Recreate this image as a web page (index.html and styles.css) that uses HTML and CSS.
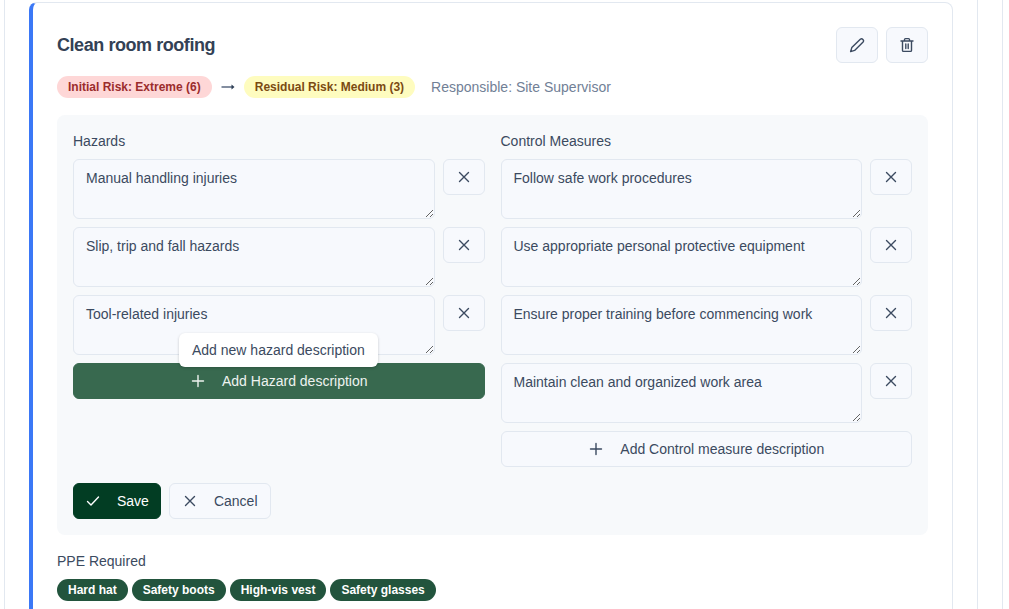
FILE: index.html
```html
<!DOCTYPE html>
<html lang="en">
<head>
    <meta charset="UTF-8">
    <meta name="viewport" content="width=device-width, initial-scale=1.0">
    <title>Clean room roofing</title>
    <link rel="stylesheet" href="styles.css">
</head>
<body>

    <svg class="sprite" width="0" height="0">
        <symbol id="i-x" viewBox="0 0 16 16"><path d="M3.500 3.500l9 9M12.500 3.500l-9 9"/></symbol>
        <symbol id="i-plus" viewBox="0 0 16 16"><path d="M8 2.500v11M2.500 8h11"/></symbol>
        <symbol id="i-check" viewBox="0 0 16 16"><path d="M2.500 8.500l3.500 3.500 7.500-8"/></symbol>
    </svg>

    <div class="page">
        <div class="section">
            <div class="card">
                <div class="card-head">
                    <h2>Clean room roofing</h2>
                    <div class="card-actions">
                        <button class="btn icon-btn" aria-label="Edit">
                            <svg class="icon" viewBox="0 0 16 16"><path d="M11.300 2.200a2 2 0 0 1 2.800 2.800L5.600 13.400l-4 1.200 1.200-4z"/></svg>
                        </button>
                        <button class="btn icon-btn" aria-label="Delete">
                            <svg class="icon" viewBox="0 0 16 16"><path d="M2 4h12M5.500 4V2.600c0-.6.4-1 1-1h3c.6 0 1 .4 1 1V4M3.500 4v9.400c0 .6.4 1 1 1h7c.6 0 1-.4 1-1V4M6.800 7v4.500M9.200 7v4.500"/></svg>
                        </button>
                    </div>
                </div>

                <div class="risk-row">
                    <span class="badge badge-red">Initial Risk: Extreme (6)</span>
                    <svg class="arrow" viewBox="0 0 16 16"><path class="arrow-line" d="M1.500 8h11"/><path class="arrow-head" d="M11.500 5.500L14.500 8l-3 2.500z"/></svg>
                    <span class="badge badge-yellow">Residual Risk: Medium (3)</span>
                    <span class="responsible">Responsible: Site Supervisor</span>
                </div>

                <div class="edit-panel">
                    <div class="columns">
                        <div class="column">
                            <div class="field-label">Hazards</div>
                            <div class="item-row">
                                <textarea readonly>Manual handling injuries</textarea>
                                <button class="btn icon-btn" aria-label="Remove"><svg class="icon"><use href="#i-x"/></svg></button>
                            </div>
                            <div class="item-row">
                                <textarea readonly>Slip, trip and fall hazards</textarea>
                                <button class="btn icon-btn" aria-label="Remove"><svg class="icon"><use href="#i-x"/></svg></button>
                            </div>
                            <div class="item-row">
                                <textarea readonly>Tool-related injuries</textarea>
                                <button class="btn icon-btn" aria-label="Remove"><svg class="icon"><use href="#i-x"/></svg></button>
                            </div>
                            <div class="add-wrap">
                                <div class="tooltip">Add new hazard description</div>
                                <button class="btn add-btn add-btn-hover"><svg class="icon"><use href="#i-plus"/></svg>Add Hazard description</button>
                            </div>
                        </div>
                        <div class="column">
                            <div class="field-label">Control Measures</div>
                            <div class="item-row">
                                <textarea readonly>Follow safe work procedures</textarea>
                                <button class="btn icon-btn" aria-label="Remove"><svg class="icon"><use href="#i-x"/></svg></button>
                            </div>
                            <div class="item-row">
                                <textarea readonly>Use appropriate personal protective equipment</textarea>
                                <button class="btn icon-btn" aria-label="Remove"><svg class="icon"><use href="#i-x"/></svg></button>
                            </div>
                            <div class="item-row">
                                <textarea readonly>Ensure proper training before commencing work</textarea>
                                <button class="btn icon-btn" aria-label="Remove"><svg class="icon"><use href="#i-x"/></svg></button>
                            </div>
                            <div class="item-row">
                                <textarea readonly>Maintain clean and organized work area</textarea>
                                <button class="btn icon-btn" aria-label="Remove"><svg class="icon"><use href="#i-x"/></svg></button>
                            </div>
                            <div class="add-wrap">
                                <button class="btn add-btn"><svg class="icon"><use href="#i-plus"/></svg>Add Control measure description</button>
                            </div>
                        </div>
                    </div>
                    <div class="form-actions">
                        <button class="btn save-btn"><svg class="icon"><use href="#i-check"/></svg>Save</button>
                        <button class="btn cancel-btn"><svg class="icon"><use href="#i-x"/></svg>Cancel</button>
                    </div>
                </div>

                <div class="ppe-label">PPE Required</div>
                <div class="ppe-list">
                    <span class="chip">Hard hat</span>
                    <span class="chip">Safety boots</span>
                    <span class="chip">High-vis vest</span>
                    <span class="chip">Safety glasses</span>
                </div>
            </div>
        </div>
        <div class="section-next"></div>
    </div>

</body>
</html>
```

FILE: styles.css
```css
html, body {
    height: 609px;
    overflow: hidden;
}

body {
    font-family: "Liberation Sans", Arial, sans-serif;
    font-size: 14px;
    line-height: 20px;
    color: #3b4a60;
    background-color: #fff;
    margin: 0;
    padding: 0;
}

.sprite {
    display: none;
}

.page {
    display: flex;
    gap: 24px;
    height: 609px;
    overflow: hidden;
    padding-left: 4px;
}

.section {
    width: 974px;
    box-sizing: border-box;
    padding: 2px 24px 0;
    border-left: 1px solid #e2e8f0;
    border-right: 1px solid #e2e8f0;
    flex-shrink: 0;
}

.section-next {
    flex: 1;
    border-left: 1px solid #e2e8f0;
}

.card {
    height: 680px;
    box-sizing: border-box;
    padding: 24px;
    background-color: #fff;
    border: 1px solid #e2e8f0;
    border-left: 4px solid #3b78f6;
    border-radius: 8px;
}

.card-head {
    display: flex;
    align-items: center;
    justify-content: space-between;
}

.card-head h2 {
    margin: 0;
    font-size: 18px;
    line-height: 28px;
    font-weight: 700;
    letter-spacing: -0.44px;
    color: #334155;
}

.card-actions {
    display: flex;
    gap: 8px;
}

.btn {
    display: inline-flex;
    align-items: center;
    justify-content: center;
    gap: 16px;
    height: 36px;
    box-sizing: border-box;
    padding: 0 12px;
    font-family: inherit;
    font-size: 14px;
    color: #3b4a60;
    background-color: #f7f9fd;
    border: 1px solid #e2e8f0;
    border-radius: 6px;
    cursor: pointer;
    flex-shrink: 0;
}

.icon-btn {
    width: 42px;
    padding: 0;
}

.icon {
    width: 16px;
    height: 16px;
    fill: none;
    stroke: currentColor;
    stroke-width: 1.4;
    stroke-linecap: round;
    stroke-linejoin: round;
    flex-shrink: 0;
}

.risk-row {
    display: flex;
    align-items: center;
    gap: 8px;
    margin-top: 13px;
}

.badge {
    height: 22px;
    padding: 0 11px;
    font-size: 12px;
    line-height: 22px;
    font-weight: 700;
    border-radius: 11px;
}

.badge-red {
    background-color: #fed7d7;
    color: #9b2c2c;
}

.badge-yellow {
    background-color: #fefcbf;
    color: #7b4a12;
}

.arrow {
    width: 16px;
    height: 16px;
}

.arrow-line {
    stroke: #5a6880;
    stroke-width: 1.5;
}

.arrow-head {
    fill: #2d3e55;
}

.responsible {
    margin-left: 8px;
    color: #718096;
}

.edit-panel {
    margin-top: 17px;
    padding: 16px;
    background-color: #f7f9fb;
    border-radius: 8px;
}

.columns {
    display: grid;
    grid-template-columns: 1fr 1fr;
    gap: 16px;
}

.column {
    min-width: 0;
}

.field-label {
    margin-bottom: 8px;
}

.item-row {
    display: flex;
    align-items: flex-start;
    gap: 8px;
    margin-bottom: 8px;
}

textarea {
    flex: 1;
    min-width: 0;
    height: 60px;
    box-sizing: border-box;
    padding: 8px 12px;
    font-family: inherit;
    font-size: 14px;
    line-height: 20px;
    color: #3b4a60;
    background-color: #f7f9fd;
    border: 1px solid #e2e8f0;
    border-radius: 6px;
    outline: none;
    resize: vertical;
}

.add-wrap {
    position: relative;
}

.add-btn {
    width: 100%;
}

.add-btn-hover {
    background-color: #38694f;
    border-color: #38694f;
    color: #eef3f0;
}

.tooltip {
    position: absolute;
    left: 106px;
    bottom: 32px;
    height: 34px;
    box-sizing: border-box;
    padding: 7px 13px;
    white-space: nowrap;
    background-color: #fff;
    border-radius: 6px;
    box-shadow: 0 1px 3px rgba(0, 0, 0, 0.2);
}

.form-actions {
    display: flex;
    gap: 8px;
    margin-top: 16px;
}

.save-btn {
    padding: 0 11px;
    background-color: #023d23;
    border-color: #023d23;
    color: #fff;
}

.ppe-label {
    margin-top: 16px;
    margin-bottom: 8px;
}

.ppe-list {
    display: flex;
    gap: 4px;
}

.chip {
    height: 22px;
    padding: 0 11px;
    font-size: 12px;
    line-height: 22px;
    font-weight: 700;
    color: #fff;
    background-color: #22543d;
    border-radius: 11px;
}
```
